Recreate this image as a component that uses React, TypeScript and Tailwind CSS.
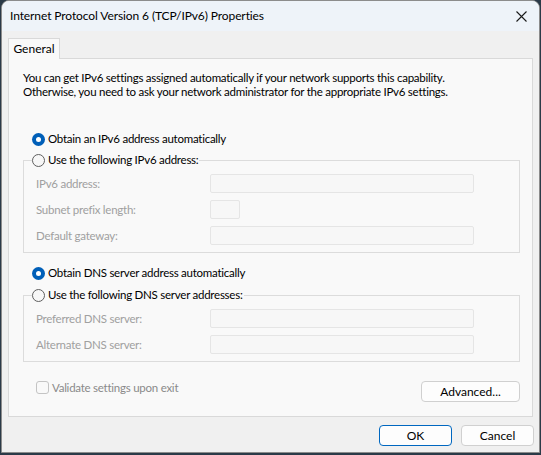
import React from 'react';

const font = "font-['Lato','Noto_Sans','Liberation_Sans',sans-serif]";
const txt = 'text-[11.5px] tracking-[-0.25px]';

const Radio = ({ checked, label }: { checked?: boolean; label: string }) => (
  <div className="flex h-[16px] items-center whitespace-nowrap">
    {checked ? (
      <span className="flex h-[13px] w-[13px] items-center justify-center rounded-full bg-[#005fb8]">
        <span className="h-[5px] w-[5px] rounded-full bg-white" />
      </span>
    ) : (
      <span className="h-[13px] w-[13px] rounded-full border border-[#5f5f5f] bg-[#f7f7f7]" />
    )}
    <span className={`ml-[3px] text-black ${txt}`}>{label}</span>
  </div>
);

const Field = ({ label, short }: { label: string; short?: boolean }) => (
  <div className="flex h-[19px] items-center">
    <span className={`w-[174px] whitespace-nowrap text-[#a0a0a0] ${txt}`}>{label}</span>
    <div
      className={
        short
          ? 'h-[19px] w-[30px] rounded-[2px] border border-[#e5e5e5] bg-[#f7f7f7]'
          : 'h-[19px] w-[264px] rounded-[2px] border border-[#e5e5e5] bg-[#f7f7f7]'
      }
    />
  </div>
);

const Group = ({ legend, children }: { legend: string; children: React.ReactNode }) => (
  <fieldset className="flex flex-col gap-[7px] border border-[#dcdcdc] pb-[7px] pl-[12px] pt-[6px]">
    <legend className="-ml-[4px] pr-[1px]">
      <Radio label={legend} />
    </legend>
    {children}
  </fieldset>
);

const Button = ({ label, primary, w }: { label: string; primary?: boolean; w: string }) => (
  <div
    className={
      (primary ? 'border-[#0067c0] ' : 'border-[#d0d0d0] ') +
      w +
      ' flex h-[21px] items-center justify-center rounded-[4px] border bg-[#fdfdfd] text-[12px] text-black'
    }
  >
    {label}
  </div>
);

export default function App() {
  return (
    <div className={`h-[455px] w-[541px] bg-[#2b3a48] ${font}`}>
      <div className="ml-[1px] flex h-[453px] w-[539px] flex-col overflow-hidden rounded-t-[8px] border border-[#8c8c8c] bg-[#f0f0f0]">
        {/* title bar */}
        <div className="flex h-[30px] items-center justify-between bg-[#eef3f9] pl-[8px] pr-[10px]">
          <span className="whitespace-nowrap text-[12px] tracking-[-0.1px] text-black">
            Internet Protocol Version 6 (TCP/IPv6) Properties
          </span>
          <svg width="11" height="11" viewBox="0 0 11 11" className="mr-[2px]">
            <path d="M0.5 0.5 L10.5 10.5 M10.5 0.5 L0.5 10.5" stroke="#1a1a1a" strokeWidth="1.1" />
          </svg>
        </div>

        {/* tab strip */}
        <div className="ml-[6px] mt-[7px] flex">
          <div className="relative z-10 -mb-px flex h-[21px] w-[52px] items-center justify-center border border-b-0 border-[#d9d9d9] bg-[#f9f9f9] text-[12px] text-black">
            General
          </div>
        </div>

        {/* tab panel */}
        <div className="ml-[6px] flex h-[359px] w-[525px] flex-col border border-[#d9d9d9] bg-[#f9f9f9] pl-[14px] pr-[12px] pt-[12px]">
          <p className={`whitespace-nowrap leading-[14px] text-black ${txt}`}>
            You can get IPv6 settings assigned automatically if your network supports this capability.
            <br />
            Otherwise, you need to ask your network administrator for the appropriate IPv6 settings.
          </p>

          <div className="ml-[9px] mt-[32px]">
            <Radio checked label="Obtain an IPv6 address automatically" />
          </div>
          <div className="mt-[5px]">
            <Group legend="Use the following IPv6 address:">
              <Field label="IPv6 address:" />
              <Field label="Subnet prefix length:" short />
              <Field label="Default gateway:" />
            </Group>
          </div>

          <div className="ml-[9px] mt-[12px]">
            <Radio checked label="Obtain DNS server address automatically" />
          </div>
          <div className="mt-[6px]">
            <Group legend="Use the following DNS server addresses:">
              <Field label="Preferred DNS server:" />
              <Field label="Alternate DNS server:" />
            </Group>
          </div>

          <div className="mt-[19px] flex items-start justify-between">
            <div className="ml-[13px] flex h-[13px] items-center">
              <span className="h-[13px] w-[13px] rounded-[3px] border border-[#c4c4c4] bg-[#f9f9f9]" />
              <span className={`ml-[3px] whitespace-nowrap text-[#8a8a8a] ${txt}`}>Validate settings upon exit</span>
            </div>
            <Button label="Advanced..." w="w-[99px]" />
          </div>
        </div>

        {/* footer buttons */}
        <div className="mt-[8px] flex justify-end gap-[9px] pr-[5px]">
          <Button label="OK" primary w="w-[73px]" />
          <Button label="Cancel" w="w-[73px]" />
        </div>
      </div>
    </div>
  );
}
